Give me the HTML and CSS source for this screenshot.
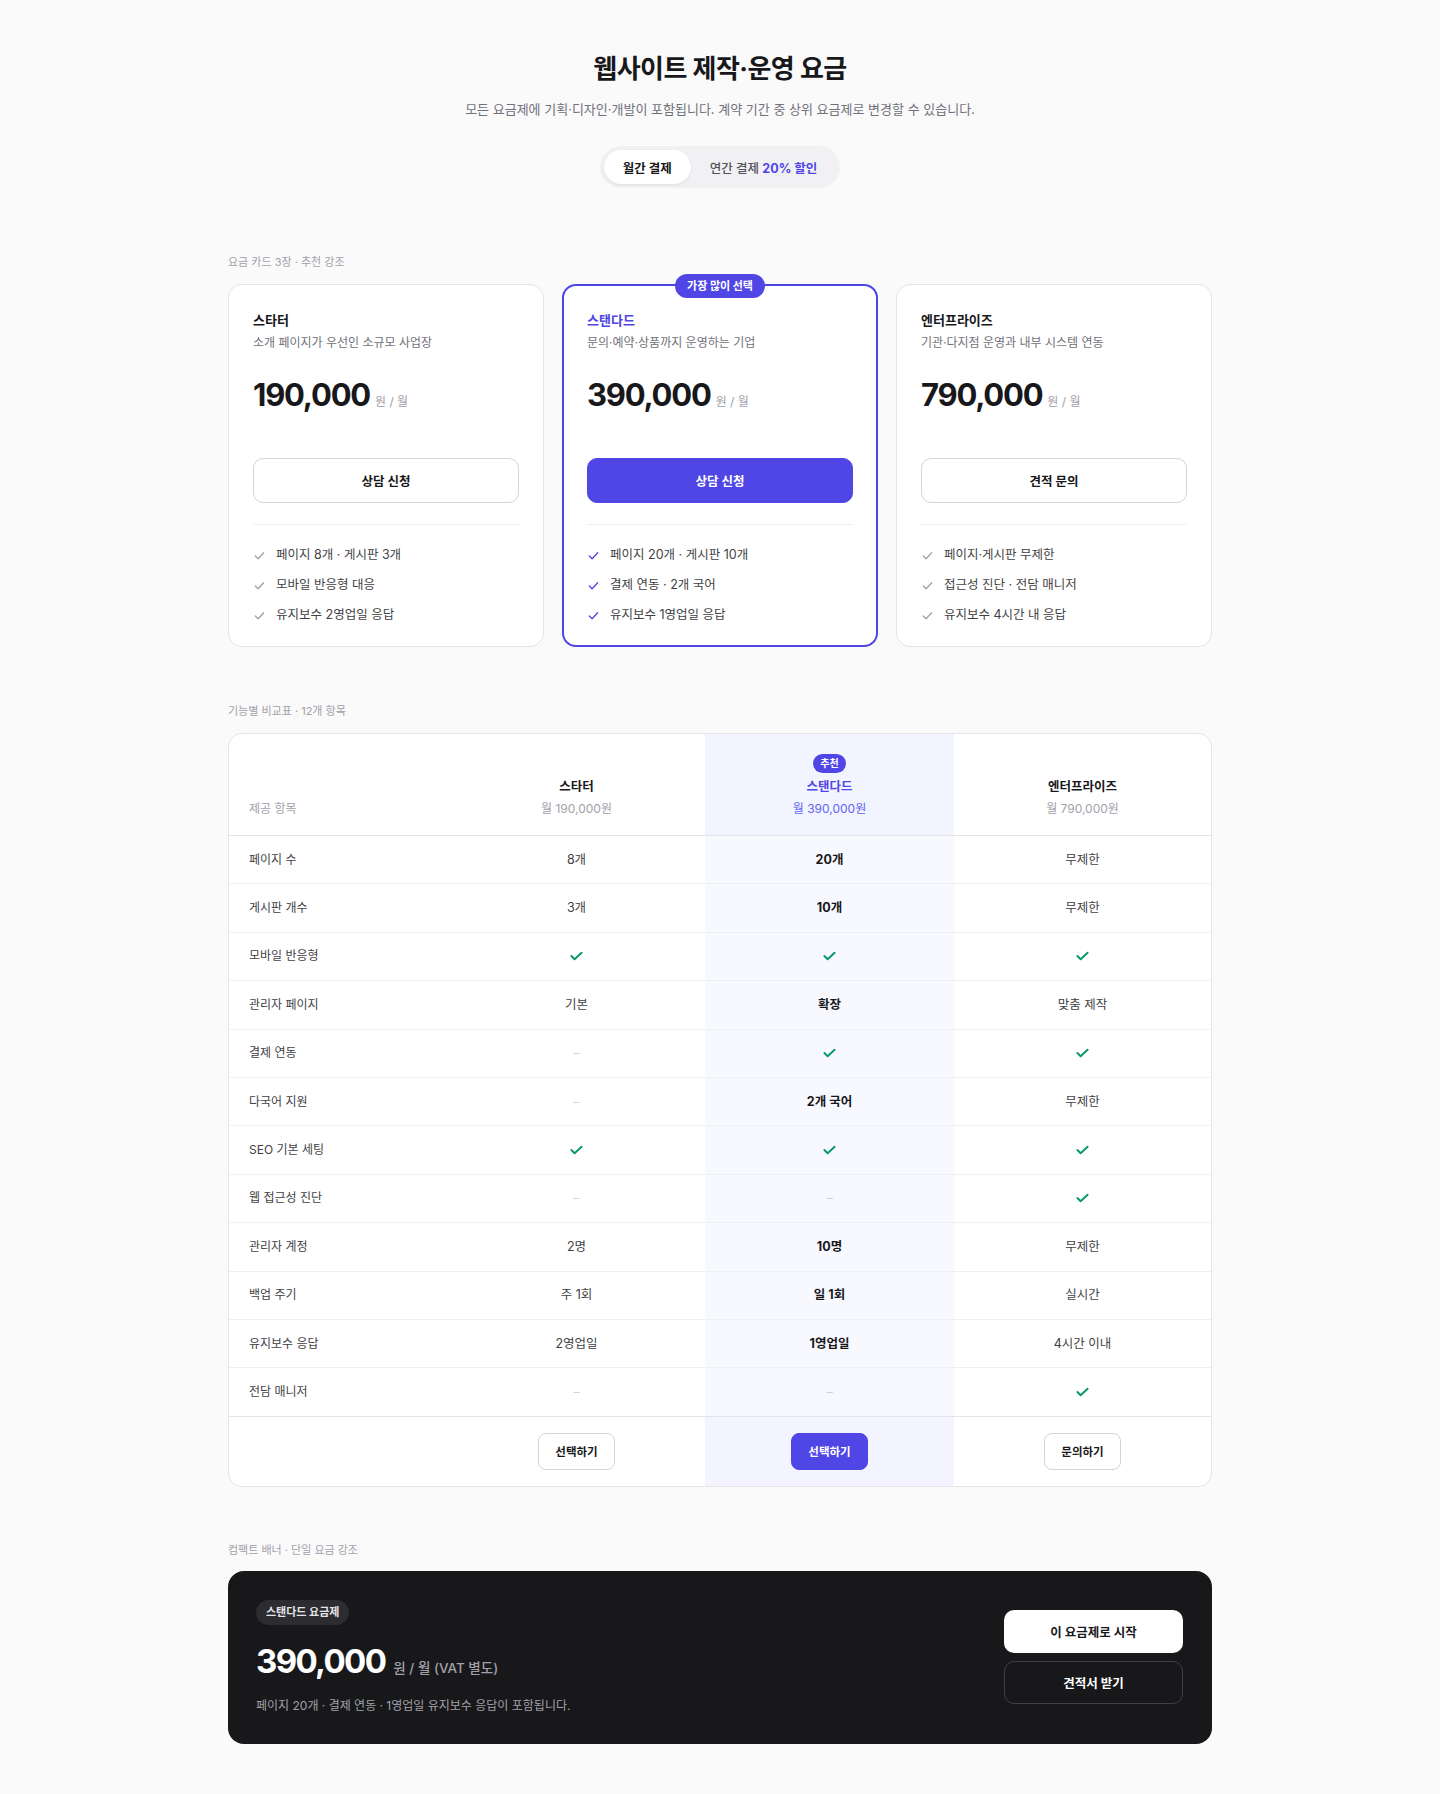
FILE: index.html
```html
<!DOCTYPE html>
<html lang="ko">
<head>
<meta charset="utf-8">
<title>웹사이트 제작·운영 요금</title>
<link rel="stylesheet" href="styles.css">
</head>
<body>
<svg class="defs" width="0" height="0" aria-hidden="true">
  <symbol id="tick" viewBox="0 0 14 14">
    <polyline points="2.5,7.5 5.5,10.5 11.5,4" fill="none" stroke="currentColor" stroke-width="1.4" stroke-linecap="round" stroke-linejoin="round"/>
  </symbol>
  <symbol id="tick-bold" viewBox="0 0 14 10">
    <polyline points="1.5,5 5,8.5 12.5,1.5" fill="none" stroke="currentColor" stroke-width="2" stroke-linecap="round" stroke-linejoin="round"/>
  </symbol>
</svg>

<div class="page">
  <header class="intro">
    <h1>웹사이트 제작·운영 요금</h1>
    <p>모든 요금제에 기획·디자인·개발이 포함됩니다. 계약 기간 중 상위 요금제로 변경할 수 있습니다.</p>
    <div class="billing">
      <button type="button" class="on">월간 결제</button>
      <button type="button">연간 결제 <em>20% 할인</em></button>
    </div>
  </header>

  <section class="block first">
    <div class="block-label">요금 카드 3장 · 추천 강조</div>
    <div class="cards">
      <div class="card">
        <h3>스타터</h3>
        <div class="who">소개 페이지가 우선인 소규모 사업장</div>
        <div class="price"><strong>190,000</strong><span>원 / 월</span></div>
        <button type="button" class="cta">상담 신청</button>
        <hr>
        <ul class="feats">
          <li><svg class="ic"><use href="#tick"/></svg>페이지 8개 · 게시판 3개</li>
          <li><svg class="ic"><use href="#tick"/></svg>모바일 반응형 대응</li>
          <li><svg class="ic"><use href="#tick"/></svg>유지보수 2영업일 응답</li>
        </ul>
      </div>
      <div class="card pick">
        <span class="ribbon">가장 많이 선택</span>
        <h3>스탠다드</h3>
        <div class="who">문의·예약·상품까지 운영하는 기업</div>
        <div class="price"><strong>390,000</strong><span>원 / 월</span></div>
        <button type="button" class="cta primary">상담 신청</button>
        <hr>
        <ul class="feats">
          <li><svg class="ic"><use href="#tick"/></svg>페이지 20개 · 게시판 10개</li>
          <li><svg class="ic"><use href="#tick"/></svg>결제 연동 · 2개 국어</li>
          <li><svg class="ic"><use href="#tick"/></svg>유지보수 1영업일 응답</li>
        </ul>
      </div>
      <div class="card">
        <h3>엔터프라이즈</h3>
        <div class="who">기관·다지점 운영과 내부 시스템 연동</div>
        <div class="price"><strong>790,000</strong><span>원 / 월</span></div>
        <button type="button" class="cta">견적 문의</button>
        <hr>
        <ul class="feats">
          <li><svg class="ic"><use href="#tick"/></svg>페이지·게시판 무제한</li>
          <li><svg class="ic"><use href="#tick"/></svg>접근성 진단 · 전담 매니저</li>
          <li><svg class="ic"><use href="#tick"/></svg>유지보수 4시간 내 응답</li>
        </ul>
      </div>
    </div>
  </section>

  <section class="block">
    <div class="block-label">기능별 비교표 · 12개 항목</div>
    <div class="cmp">
      <div class="cmp-row cmp-head">
        <div class="cell lbl"><span class="fee">제공 항목</span></div>
        <div class="cell"><span class="name">스타터</span><span class="fee">월 190,000원</span></div>
        <div class="cell hl"><span class="tag">추천</span><span class="name">스탠다드</span><span class="fee">월 390,000원</span></div>
        <div class="cell"><span class="name">엔터프라이즈</span><span class="fee">월 790,000원</span></div>
      </div>

      <div class="cmp-row"><div class="cell lbl">페이지 수</div><div class="cell">8개</div><div class="cell hl">20개</div><div class="cell">무제한</div></div>
      <div class="cmp-row"><div class="cell lbl">게시판 개수</div><div class="cell">3개</div><div class="cell hl">10개</div><div class="cell">무제한</div></div>
      <div class="cmp-row"><div class="cell lbl">모바일 반응형</div><div class="cell"><svg class="ok"><use href="#tick-bold"/></svg></div><div class="cell hl"><svg class="ok"><use href="#tick-bold"/></svg></div><div class="cell"><svg class="ok"><use href="#tick-bold"/></svg></div></div>
      <div class="cmp-row"><div class="cell lbl">관리자 페이지</div><div class="cell">기본</div><div class="cell hl">확장</div><div class="cell">맞춤 제작</div></div>
      <div class="cmp-row"><div class="cell lbl">결제 연동</div><div class="cell"><span class="no">–</span></div><div class="cell hl"><svg class="ok"><use href="#tick-bold"/></svg></div><div class="cell"><svg class="ok"><use href="#tick-bold"/></svg></div></div>
      <div class="cmp-row"><div class="cell lbl">다국어 지원</div><div class="cell"><span class="no">–</span></div><div class="cell hl">2개 국어</div><div class="cell">무제한</div></div>
      <div class="cmp-row"><div class="cell lbl">SEO 기본 세팅</div><div class="cell"><svg class="ok"><use href="#tick-bold"/></svg></div><div class="cell hl"><svg class="ok"><use href="#tick-bold"/></svg></div><div class="cell"><svg class="ok"><use href="#tick-bold"/></svg></div></div>
      <div class="cmp-row"><div class="cell lbl">웹 접근성 진단</div><div class="cell"><span class="no">–</span></div><div class="cell hl"><span class="no">–</span></div><div class="cell"><svg class="ok"><use href="#tick-bold"/></svg></div></div>
      <div class="cmp-row"><div class="cell lbl">관리자 계정</div><div class="cell">2명</div><div class="cell hl">10명</div><div class="cell">무제한</div></div>
      <div class="cmp-row"><div class="cell lbl">백업 주기</div><div class="cell">주 1회</div><div class="cell hl">일 1회</div><div class="cell">실시간</div></div>
      <div class="cmp-row"><div class="cell lbl">유지보수 응답</div><div class="cell">2영업일</div><div class="cell hl">1영업일</div><div class="cell">4시간 이내</div></div>
      <div class="cmp-row"><div class="cell lbl">전담 매니저</div><div class="cell"><span class="no">–</span></div><div class="cell hl"><span class="no">–</span></div><div class="cell"><svg class="ok"><use href="#tick-bold"/></svg></div></div>

      <div class="cmp-row cmp-foot">
        <div class="cell lbl"></div>
        <div class="cell"><button type="button" class="sel">선택하기</button></div>
        <div class="cell hl"><button type="button" class="sel primary">선택하기</button></div>
        <div class="cell"><button type="button" class="sel">문의하기</button></div>
      </div>
    </div>
  </section>

  <section class="block last">
    <div class="block-label">컴팩트 배너 · 단일 요금 강조</div>
    <div class="deal">
      <div class="deal-info">
        <span class="deal-tag">스탠다드 요금제</span>
        <div class="deal-price"><strong>390,000</strong><span>원 / 월 (VAT 별도)</span></div>
        <p>페이지 20개 · 결제 연동 · 1영업일 유지보수 응답이 포함됩니다.</p>
      </div>
      <div class="deal-acts">
        <button type="button" class="start">이 요금제로 시작</button>
        <button type="button" class="quote">견적서 받기</button>
      </div>
    </div>
  </section>
</div>
</body>
</html>
```

FILE: styles.css
```css
* {
  box-sizing: border-box;
}
body {
  margin: 0;
  background: #fafafa;
  color: #18181b;
  font-family: Inter, "Noto Sans CJK KR", sans-serif;
  letter-spacing: 0;
}
button {
  font-family: inherit;
  letter-spacing: inherit;
  cursor: pointer;
}
.defs {
  position: absolute;
}
.page {
  width: 984px;
  margin: 0 auto;
  padding: 51px 0 49px;
}

/* top heading + billing switch */
.intro {
  text-align: center;
}
.intro h1 {
  margin: 0;
  font-size: 26px;
  line-height: 36px;
  font-weight: 700;
  letter-spacing: -0.02em;
}
.intro p {
  margin: 11px 0 0;
  font-size: 13px;
  line-height: 22px;
  color: #71717a;
}
.billing {
  display: inline-flex;
  margin-top: 26px;
  padding: 4px;
  background: #f1f1f4;
  border-radius: 999px;
}
.billing button {
  height: 34px;
  padding: 0 19px;
  border: 0;
  border-radius: 999px;
  background: none;
  font-size: 12.5px;
  font-weight: 500;
  color: #52525b;
}
.billing .on {
  background: #fff;
  color: #18181b;
  font-weight: 700;
  box-shadow: 0 1px 3px rgba(0, 0, 0, 0.08);
}
.billing em {
  font-style: normal;
  font-weight: 700;
  color: #4f46e5;
}

/* sections */
.block {
  margin-top: 56px;
}
.block.first {
  margin-top: 66px;
}
.block.last {
  margin-top: 55px;
}
.block-label {
  margin-bottom: 14px;
  font-size: 11px;
  line-height: 16px;
  color: #a1a1aa;
}
.block.last .block-label {
  margin-bottom: 13px;
}

/* plan cards */
.cards {
  display: grid;
  grid-template-columns: repeat(3, 1fr);
  gap: 18px;
}
.card {
  position: relative;
  padding: 24px 24px 21px;
  background: #fff;
  border: 1px solid #e4e4e7;
  border-radius: 14px;
}
.card.pick {
  padding: 23px 23px 20px;
  border: 2px solid #4f46e5;
}
.ribbon {
  position: absolute;
  top: -12px;
  left: 50%;
  transform: translateX(-50%);
  height: 24px;
  padding: 0 12px;
  border-radius: 999px;
  background: #4f46e5;
  color: #fff;
  font-size: 11px;
  line-height: 24px;
  font-weight: 700;
  white-space: nowrap;
}
.card h3 {
  margin: 0;
  font-size: 13px;
  line-height: 22px;
  font-weight: 700;
}
.card.pick h3 {
  color: #4f46e5;
}
.who {
  margin-top: 2px;
  font-size: 12px;
  line-height: 20px;
  color: #71717a;
}
.price {
  display: flex;
  align-items: baseline;
  gap: 5px;
  margin-top: 22px;
}
.price strong {
  font-size: 31px;
  line-height: 40px;
  font-weight: 700;
  letter-spacing: -0.04em;
}
.price span {
  font-size: 12px;
  color: #a1a1aa;
}
.cta {
  display: block;
  width: 100%;
  height: 45px;
  margin-top: 43px;
  background: #fff;
  border: 1px solid #d4d4d8;
  border-radius: 10px;
  color: #18181b;
  font-size: 12.5px;
  font-weight: 700;
}
.cta.primary {
  background: #4f46e5;
  border-color: #4f46e5;
  color: #fff;
}
.card hr {
  margin: 21px 0 0;
  border: 0;
  border-top: 1px solid #f0f0f2;
}
.feats {
  display: grid;
  gap: 10px;
  margin: 20px 0 0;
  padding: 0;
  list-style: none;
}
.feats li {
  display: flex;
  align-items: center;
  gap: 10px;
  font-size: 12.5px;
  line-height: 20px;
  color: #3f3f46;
}
.ic {
  width: 13px;
  height: 13px;
  flex: none;
  color: #a1a1aa;
}
.pick .ic {
  color: #4f46e5;
}

/* comparison table */
.cmp {
  background: #fff;
  border: 1px solid #e4e4e7;
  border-radius: 14px;
  overflow: hidden;
}
.cmp-row {
  display: grid;
  grid-template-columns: 219px 257px 249px 1fr;
  height: 48.4px;
  border-bottom: 1px solid #f0f0f2;
}
.cell {
  display: flex;
  align-items: center;
  justify-content: center;
  font-size: 12.5px;
  line-height: 18px;
  color: #3f3f46;
}
.cell.lbl {
  justify-content: flex-start;
  padding-left: 20px;
  font-size: 12px;
}
.cell.hl {
  background: #f8f9ff;
  color: #18181b;
  font-weight: 700;
}
.cmp-row:nth-last-child(2) {
  border-bottom-color: #e4e4e7;
}
.cmp-head {
  height: 102px;
  border-bottom-color: #e4e4e7;
}
.cmp-head .cell {
  flex-direction: column;
  justify-content: flex-end;
  padding-bottom: 17px;
}
.cmp-head .cell.lbl {
  align-items: flex-start;
}
.cmp-head .cell.hl {
  background: #f2f4ff;
}
.cmp-head .name {
  font-size: 12.5px;
  line-height: 20px;
  font-weight: 700;
  color: #18181b;
}
.cmp-head .fee {
  margin-top: 3px;
  font-size: 12px;
  line-height: 18px;
  font-weight: 400;
  color: #a1a1aa;
}
.cmp-head .hl .name {
  color: #4f46e5;
}
.cmp-head .hl .fee {
  color: #6366f1;
}
.cmp-head .tag {
  height: 19px;
  margin-bottom: 4px;
  padding: 0 7px;
  border-radius: 999px;
  background: #4f46e5;
  color: #fff;
  font-size: 10px;
  line-height: 19px;
  font-weight: 700;
}
.ok {
  width: 13px;
  height: 10px;
  color: #059669;
}
.no {
  color: #d4d4d8;
  font-weight: 400;
}
.cmp-foot {
  height: 69px;
  border-bottom: 0;
}
.cmp-foot .cell.hl {
  background: #f3f4ff;
}
.sel {
  height: 37px;
  padding: 0 16px;
  background: #fff;
  border: 1px solid #d4d4d8;
  border-radius: 8px;
  color: #18181b;
  font-size: 11.5px;
  font-weight: 700;
}
.sel.primary {
  background: #4f46e5;
  border-color: #4f46e5;
  color: #fff;
}

/* dark banner */
.deal {
  display: flex;
  align-items: center;
  justify-content: space-between;
  padding: 29px 29px 29px 28px;
  background: #18181b;
  border-radius: 16px;
  color: #fff;
}
.deal-tag {
  display: inline-block;
  height: 25px;
  padding: 0 10px;
  border-radius: 999px;
  background: #2c2c31;
  color: #e4e4e7;
  font-size: 11px;
  line-height: 25px;
  font-weight: 700;
}
.deal-price {
  display: flex;
  align-items: baseline;
  gap: 8px;
  margin-top: 16px;
}
.deal-price strong {
  font-size: 33px;
  line-height: 40px;
  font-weight: 700;
  letter-spacing: -0.05em;
}
.deal-price span {
  font-size: 13.5px;
  font-weight: 500;
  color: #a1a1aa;
}
.deal p {
  margin: 16px 0 0;
  font-size: 12px;
  line-height: 18px;
  color: #a1a1aa;
}
.deal-acts {
  display: flex;
  flex-direction: column;
  gap: 8px;
  width: 179px;
}
.deal-acts button {
  height: 43px;
  border-radius: 10px;
  font-size: 12.5px;
  font-weight: 700;
}
.start {
  background: #fff;
  border: 0;
  color: #18181b;
}
.quote {
  background: transparent;
  border: 1px solid #3f3f46;
  color: #fff;
}
```
